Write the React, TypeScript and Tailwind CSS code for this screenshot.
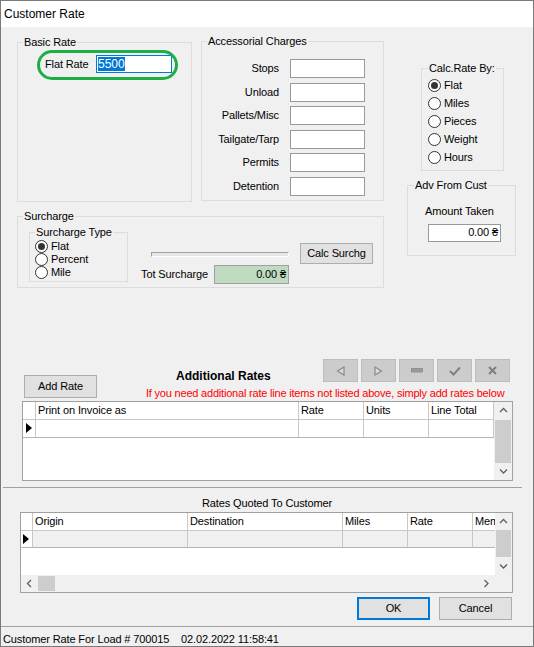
import type { ReactNode } from 'react'

function GroupBox({ label, className, labelLeft = 'left-[5px]', children }: { label: string; className: string; labelLeft?: string; children?: ReactNode }) {
  return (
    <div className={`relative border border-[#dcdcdc] ${className}`}>
      <span className={`absolute top-[-7px] ${labelLeft} px-[1px] bg-[#f0f0f0] leading-[13px] whitespace-nowrap`}>{label}</span>
      {children}
    </div>
  )
}

function Radio({ label, checked = false, className = 'h-[18px]' }: { label: string; checked?: boolean; className?: string }) {
  return (
    <div className={`flex items-center ${className}`}>
      <span className="w-[13px] h-[13px] rounded-full border border-[#333] bg-white flex items-center justify-center shrink-0">
        {checked && <span className="w-[7px] h-[7px] rounded-full bg-[#333]" />}
      </span>
      <span className="ml-[3px] leading-[13px]">{label}</span>
    </div>
  )
}

function TextBox({ className, value = '' }: { className: string; value?: string }) {
  return <div className={`bg-white border border-[#999] text-right pr-[2px] leading-[15px] ${className}`}>{value}</div>
}

function Chevron({ dir }: { dir: 'up' | 'down' | 'left' | 'right' }) {
  const pts = {
    up: '1,5 4.5,1.5 8,5',
    down: '1,1.5 4.5,5 8,1.5',
    left: '5,1 1.5,4.5 5,8',
    right: '1.5,1 5,4.5 1.5,8',
  }[dir]
  const size = dir === 'up' || dir === 'down' ? { w: 9, h: 7 } : { w: 7, h: 9 }
  return (
    <svg width={size.w} height={size.h} viewBox={`0 0 ${size.w} ${size.h}`}>
      <polyline points={pts} fill="none" stroke="#606060" strokeWidth="1.3" />
    </svg>
  )
}

function RowMarker() {
  return (
    <svg width="7" height="10" viewBox="0 0 7 10">
      <polygon points="0,0 6,5 0,10" fill="#000" />
    </svg>
  )
}

function NavButton({ children }: { children: ReactNode }) {
  return <div className="w-[35px] h-[23px] bg-[#cccccc] border border-[#bdbdbd] flex items-center justify-center shrink-0">{children}</div>
}

function WinButton({ label, className, focused = false }: { label: string; className: string; focused?: boolean }) {
  return (
    <div
      className={`flex items-center justify-center bg-[#e1e1e1] ${focused ? 'border-2 border-[#0078d7]' : 'border border-[#adadad]'} ${className}`}
    >
      {label}
    </div>
  )
}

export default function App() {
  const accessorial = ['Stops', 'Unload', 'Pallets/Misc', 'Tailgate/Tarp', 'Permits', 'Detention']

  return (
    <div className="w-[534px] h-[647px] border border-[#7a7a7a] bg-[#f0f0f0] flex flex-col overflow-hidden text-[11px] tracking-[-0.12px] text-black font-['Liberation_Sans','DejaVu_Sans',sans-serif]">
      {/* title bar */}
      <div className="h-[26px] bg-white flex items-center pl-[3px] text-[12px] tracking-normal shrink-0">Customer Rate</div>

      {/* body */}
      <div className="h-[599px] flex flex-col shrink-0">
        <div className="flex items-start mt-[14px] ml-[16px]">
          <div className="flex flex-col">
            <div className="flex items-start">
              <GroupBox label="Basic Rate" className="w-[175px] h-[160px] mt-[1px]">
                <div className="flex items-center pt-[12px] pl-[27px]">
                  <span className="w-[51px] leading-[13px]">Flat Rate</span>
                  <div className="w-[76px] h-[18px] bg-white border border-[#0078d7] flex items-center pl-[1px] text-[12px] tracking-normal">
                    <span className="bg-[#0078d7] text-white leading-[14px]">5500</span>
                  </div>
                </div>
                <div className="absolute left-[19px] top-[7px] w-[141px] h-[30px] border-[3px] border-[#1eae48] rounded-[15px]" />
              </GroupBox>

              <GroupBox label="Accessorial Charges" className="w-[183px] h-[160px] ml-[9px]">
                <div className="flex flex-col gap-[4.6px] pt-[17px]">
                  {accessorial.map((a) => (
                    <div key={a} className="flex items-center h-[19px]">
                      <span className="w-[77px] text-right leading-[13px]">{a}</span>
                      <TextBox className="w-[75px] h-[19px] ml-[11px]" />
                    </div>
                  ))}
                </div>
              </GroupBox>
            </div>

            <GroupBox label="Surcharge" className="w-[367px] h-[72px] mt-[14px]">
              <div className="flex items-start">
                <GroupBox label="Surcharge Type" className="w-[99px] h-[50px] ml-[11px] mt-[15px]">
                  <div className="flex flex-col pt-[7px] pl-[5px]">
                    <Radio label="Flat" checked className="h-[13px]" />
                    <Radio label="Percent" className="h-[13px]" />
                    <Radio label="Mile" className="h-[13px]" />
                  </div>
                </GroupBox>

                <div className="flex flex-col ml-[13px] w-[148px]">
                  <div className="ml-[10px] mt-[35px] w-[138px] h-[5px] border border-[#a0a0a0] border-b-white border-r-white bg-[#e7e7e7]" />
                  <div className="flex items-center mt-[8px]">
                    <span className="w-[73px] leading-[13px]">Tot Surcharge</span>
                    <div className="w-[75px] h-[19px] bg-[#c0dcc0] border border-[#a0a0a0] text-right pr-[2px] leading-[17px]">0.00 ₴</div>
                  </div>
                </div>

                <WinButton label="Calc Surchg" className="w-[73px] h-[21px] ml-[11px] mt-[26px]" />
              </div>
            </GroupBox>
          </div>

          <div className="flex flex-col ml-[23px]">
            <GroupBox label="Calc.Rate By:" className="w-[83px] h-[103px] ml-[14px] mt-[27px]" labelLeft="left-[6px]">
              <div className="flex flex-col pt-[7px] pl-[6px]">
                <Radio label="Flat" checked />
                <Radio label="Miles" />
                <Radio label="Pieces" />
                <Radio label="Weight" />
                <Radio label="Hours" />
              </div>
            </GroupBox>

            <GroupBox label="Adv From Cust" className="w-[109px] h-[71px] mt-[14px]" labelLeft="left-[6px]">
              <div className="flex flex-col items-start pt-[19px] pl-[17px]">
                <span className="leading-[13px]">Amount Taken</span>
                <TextBox className="w-[73px] h-[18px] ml-[3px] mt-[6px]" value="0.00 ₴" />
              </div>
            </GroupBox>
          </div>
        </div>

        {/* additional rates header */}
        <div className="flex items-start mt-[71px]">
          <WinButton label="Add Rate" className="w-[73px] h-[23px] ml-[23px] mt-[16px] shrink-0" />
          <div className="flex flex-col w-[364px] ml-[49px] shrink-0">
            <div className="flex h-[23px]">
              <div className="ml-[30px] mt-[10px] font-bold text-[12px] tracking-normal leading-[15px] whitespace-nowrap">Additional Rates</div>
              <div className="ml-auto flex gap-[3px]">
                <NavButton>
                  <svg width="9" height="10" viewBox="0 0 9 10">
                    <polygon points="8,1 1.5,5 8,9" fill="#dcdcdc" stroke="#8a8a8a" strokeWidth="1.2" />
                  </svg>
                </NavButton>
                <NavButton>
                  <svg width="9" height="10" viewBox="0 0 9 10">
                    <polygon points="1,1 7.5,5 1,9" fill="#dcdcdc" stroke="#8a8a8a" strokeWidth="1.2" />
                  </svg>
                </NavButton>
                <NavButton>
                  <svg width="12" height="5" viewBox="0 0 12 5">
                    <rect x="0.5" y="0.5" width="11" height="3.5" fill="#9a9a9a" stroke="#8a8a8a" strokeWidth="0.8" />
                  </svg>
                </NavButton>
                <NavButton>
                  <svg width="12" height="10" viewBox="0 0 12 10">
                    <polyline points="1,5 4.5,8.5 11,1.5" fill="none" stroke="#808080" strokeWidth="2" />
                  </svg>
                </NavButton>
                <NavButton>
                  <svg width="9" height="9" viewBox="0 0 9 9">
                    <path d="M1 1 L8 8 M8 1 L1 8" stroke="#808080" strokeWidth="2" />
                  </svg>
                </NavButton>
              </div>
            </div>
            <div className="mt-[4.5px] leading-[13px] text-[#ff0000] whitespace-nowrap tracking-[-0.2px]">
              If you need additional rate line items not listed above, simply add rates below
            </div>
          </div>
        </div>

        {/* additional rates grid */}
        <div className="ml-[21px] mt-[1px] w-[491px] h-[80px] border border-[#a0a0a0] bg-white flex shrink-0">
          <div className="flex flex-col w-[471px]">
            <div className="flex h-[18px] border-b border-[#c8c8c8] shrink-0">
              <div className="w-[13px] border-r border-[#c8c8c8]" />
              <div className="w-[263px] border-r border-[#c8c8c8] pl-[2px] leading-[17px]">Print on Invoice as</div>
              <div className="w-[65px] border-r border-[#c8c8c8] pl-[2px] leading-[17px]">Rate</div>
              <div className="w-[65px] border-r border-[#c8c8c8] pl-[2px] leading-[17px]">Units</div>
              <div className="w-[65px] border-r border-[#c8c8c8] pl-[2px] leading-[17px]">Line Total</div>
            </div>
            <div className="flex h-[18px] border-b border-[#b4b4b4] shrink-0">
              <div className="w-[13px] border-r border-[#c8c8c8] flex items-center pl-[3px]">
                <RowMarker />
              </div>
              <div className="w-[263px] border-r border-[#c8c8c8]" />
              <div className="w-[65px] border-r border-[#c8c8c8]" />
              <div className="w-[65px] border-r border-[#c8c8c8]" />
              <div className="w-[65px] border-r border-[#c8c8c8]" />
            </div>
          </div>
          <div className="w-[18px] bg-[#f0f0f0] flex flex-col">
            <div className="h-[18px] flex items-center justify-center">
              <Chevron dir="up" />
            </div>
            <div className="h-[43px] mx-[1px] bg-[#cdcdcd]" />
            <div className="flex-1 flex items-center justify-center">
              <Chevron dir="down" />
            </div>
          </div>
        </div>

        <div className="ml-[2px] mt-[6.5px] w-[519px] h-[1px] bg-[#a0a0a0] shrink-0" />

        <div className="mt-[8.5px] text-center leading-[13px]">Rates Quoted To Customer</div>

        {/* rates quoted grid */}
        <div className="ml-[19px] mt-[2.5px] w-[493px] h-[81px] border border-[#a0a0a0] bg-white flex flex-col shrink-0">
          <div className="flex h-[62px]">
            <div className="flex flex-col w-[474px] overflow-hidden">
              <div className="flex h-[18px] border-b border-[#c8c8c8] shrink-0">
                <div className="w-[12px] border-r border-[#c8c8c8] shrink-0" />
                <div className="w-[155px] border-r border-[#c8c8c8] pl-[2px] leading-[17px] shrink-0">Origin</div>
                <div className="w-[155px] border-r border-[#c8c8c8] pl-[2px] leading-[17px] shrink-0">Destination</div>
                <div className="w-[65px] border-r border-[#c8c8c8] pl-[2px] leading-[17px] shrink-0">Miles</div>
                <div className="w-[65px] border-r border-[#c8c8c8] pl-[2px] leading-[17px] shrink-0">Rate</div>
                <div className="w-[40px] pl-[2px] leading-[17px] shrink-0">Memo</div>
              </div>
              <div className="flex h-[17px] border-b border-[#b4b4b4] shrink-0">
                <div className="w-[12px] border-r border-[#c8c8c8] flex items-center pl-[2px] shrink-0">
                  <RowMarker />
                </div>
                <div className="w-[155px] border-r border-[#c8c8c8] bg-[#f0f0f0] shrink-0" />
                <div className="w-[155px] border-r border-[#c8c8c8] bg-[#f0f0f0] shrink-0" />
                <div className="w-[65px] border-r border-[#c8c8c8] bg-[#f0f0f0] shrink-0" />
                <div className="w-[65px] border-r border-[#c8c8c8] bg-[#f0f0f0] shrink-0" />
                <div className="w-[40px] bg-[#f0f0f0] shrink-0" />
              </div>
            </div>
            <div className="w-[17px] bg-[#f0f0f0] flex flex-col">
              <div className="h-[17px] flex items-center justify-center">
                <Chevron dir="up" />
              </div>
              <div className="h-[27px] mx-[1px] bg-[#cdcdcd]" />
              <div className="flex-1 flex items-center justify-center">
                <Chevron dir="down" />
              </div>
            </div>
          </div>
          <div className="flex h-[17px]">
            <div className="flex-1 bg-[#f0f0f0] flex items-center">
              <div className="w-[17px] flex items-center justify-center">
                <Chevron dir="left" />
              </div>
              <div className="w-[17px] h-[15px] bg-[#cdcdcd]" />
              <div className="ml-auto w-[17px] flex items-center justify-center">
                <Chevron dir="right" />
              </div>
            </div>
            <div className="w-[17px] bg-[#f0f0f0]" />
          </div>
        </div>

        <div className="flex justify-end gap-[9px] mt-[4px] pr-[21px]">
          <WinButton label="OK" focused className="w-[73px] h-[23px]" />
          <WinButton label="Cancel" className="w-[73px] h-[23px]" />
        </div>
      </div>

      {/* status bar */}
      <div className="flex-1 border-t border-[#a0a0a0] pl-[2px] pt-[6px] leading-[13px] whitespace-pre">
        Customer Rate For Load # 700015    02.02.2022 11:58:41
      </div>
    </div>
  )
}
